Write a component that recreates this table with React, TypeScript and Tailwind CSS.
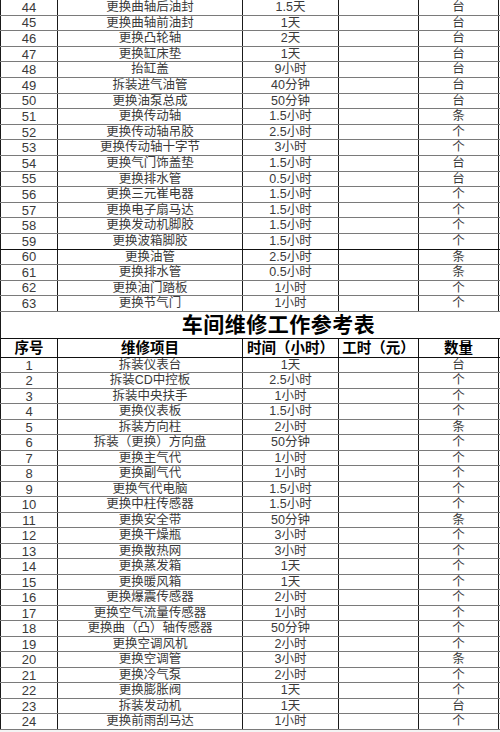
import React from "react";

type Row = [string, string, string, string];

const top: Row[] = [
  ["44", "更换曲轴后油封", "1.5天", "台"],
  ["45", "更换曲轴前油封", "1天", "台"],
  ["46", "更换凸轮轴", "2天", "台"],
  ["47", "更换缸床垫", "1天", "台"],
  ["48", "抬缸盖", "9小时", "台"],
  ["49", "拆装进气油管", "40分钟", "台"],
  ["50", "更换油泵总成", "50分钟", "台"],
  ["51", "更换传动轴", "1.5小时", "条"],
  ["52", "更换传动轴吊胶", "2.5小时", "个"],
  ["53", "更换传动轴十字节", "3小时", "个"],
  ["54", "更换气门饰盖垫", "1.5小时", "台"],
  ["55", "更换排水管", "0.5小时", "台"],
  ["56", "更换三元崔电器", "1.5小时", "个"],
  ["57", "更换电子扇马达", "1.5小时", "个"],
  ["58", "更换发动机脚胶", "1.5小时", "个"],
  ["59", "更换波箱脚胶", "1.5小时", "个"],
  ["60", "更换油管", "2.5小时", "条"],
  ["61", "更换排水管", "0.5小时", "条"],
  ["62", "更换油门踏板", "1小时", "个"],
  ["63", "更换节气门", "1小时", "个"],
];

const bottom: Row[] = [
  ["1", "拆装仪表台", "1天", "台"],
  ["2", "拆装CD中控板", "2.5小时", "个"],
  ["3", "拆装中央扶手", "1小时", "个"],
  ["4", "更换仪表板", "1.5小时", "个"],
  ["5", "拆装方向柱", "2小时", "条"],
  ["6", "拆装（更换）方向盘", "50分钟", "个"],
  ["7", "更换主气代", "1小时", "个"],
  ["8", "更换副气代", "1小时", "个"],
  ["9", "更换气代电脑", "1.5小时", "个"],
  ["10", "更换中柱传感器", "1.5小时", "个"],
  ["11", "更换安全带", "50分钟", "条"],
  ["12", "更换干燥瓶", "3小时", "个"],
  ["13", "更换散热网", "3小时", "个"],
  ["14", "更换蒸发箱", "1天", "个"],
  ["15", "更换暖风箱", "1天", "个"],
  ["16", "更换爆震传感器", "2小时", "个"],
  ["17", "更换空气流量传感器", "1小时", "个"],
  ["18", "更换曲（凸）轴传感器", "50分钟", "个"],
  ["19", "更换空调风机", "2小时", "个"],
  ["20", "更换空调管", "3小时", "条"],
  ["21", "更换冷气泵", "2小时", "个"],
  ["22", "更换膨胀阀", "1天", "个"],
  ["23", "拆装发动机", "1天", "台"],
  ["24", "更换前雨刮马达", "1小时", "个"],
];

const font = { fontFamily: '"Liberation Sans", "Noto Sans CJK SC", sans-serif' };

function DataRow({ r, h, dark }: { r: Row; h: string; dark?: boolean }) {
  const cell = "flex items-center justify-center border-r border-[#1a1a1a] leading-none";
  return (
    <div
      className={`grid grid-cols-[58px_185px_96px_80px_80px] ${h} border-b ${
        dark ? "border-b-[#111]" : "border-b-[#7a7a7a]"
      } text-[12.5px] text-[#3a3a3a]`}
    >
      <div className={`${cell} border-l text-[13px]`}>{r[0]}</div>
      <div className={cell}>{r[1]}</div>
      <div className={cell}>{r[2]}</div>
      <div className={cell}></div>
      <div className={cell}>{r[3]}</div>
    </div>
  );
}

export default function App() {
  const head = "flex items-center justify-center border-r border-[#111] leading-none";
  return (
    <div className="w-[500px] h-[732px] bg-[#f4f4f4] overflow-hidden" style={font}>
      <div className="bg-white">
        {top.map((r) => (
          <DataRow key={r[0]} r={r} h="h-[15.6px]" dark={r[0] === "59"} />
        ))}
        <div className="h-[27px] border-l border-l-[#1a1a1a] border-b border-b-[#111] flex items-center justify-center pl-[56px]">
          <span className="text-[21px] font-bold text-black tracking-[0.5px]">车间维修工作参考表</span>
        </div>
        <div className="grid grid-cols-[58px_185px_96px_80px_80px] h-[19px] border-b border-b-[#111] text-[14.5px] font-bold text-black">
          <div className={`${head} border-l`}>序号</div>
          <div className={head}>维修项目</div>
          <div className={head}>时间（小时）</div>
          <div className={head}>工时（元）</div>
          <div className={head}>数量</div>
        </div>
        {bottom.map((r) => (
          <DataRow key={r[0]} r={r} h="h-[15.5px]" />
        ))}
      </div>
    </div>
  );
}
